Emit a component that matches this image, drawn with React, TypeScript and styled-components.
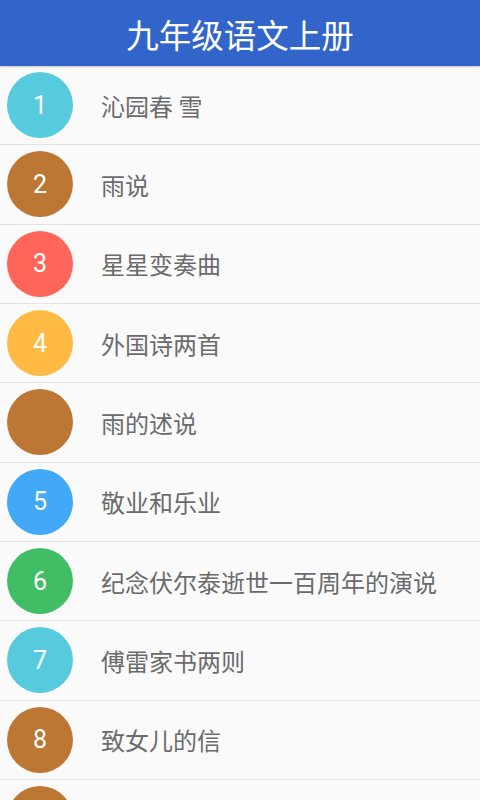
import React from "react";
import styled, {createGlobalStyle} from "styled-components";

const GlobalStyle = createGlobalStyle`
  html, body {
    margin: 0;
    padding: 0;
    background: #fafafa;
    font-family: Roboto, "Noto Sans CJK SC", sans-serif;
  }
`;

interface Lesson {
    num?: string;
    title?: string;
    color: string;
}

// last row only peeks in at the bottom edge
const lessons: Lesson[] = [
    {num: "1", title: "沁园春 雪", color: "#57cbde"},
    {num: "2", title: "雨说", color: "#bd7734"},
    {num: "3", title: "星星变奏曲", color: "#ff6559"},
    {num: "4", title: "外国诗两首", color: "#ffba43"},
    {title: "雨的述说", color: "#bd7734"},
    {num: "5", title: "敬业和乐业", color: "#42a8f8"},
    {num: "6", title: "纪念伏尔泰逝世一百周年的演说", color: "#41be65"},
    {num: "7", title: "傅雷家书两则", color: "#57cbde"},
    {num: "8", title: "致女儿的信", color: "#bd7734"},
    {color: "#bd7734"},
];

const S = {
    Page: styled.div`
      width: 480px;
      height: 800px;
      overflow: hidden;
      background: #fafafa;
    `,
    Header: styled.header`
      height: 66px;
      background: #3165c9;
      display: flex;
      align-items: center;
      justify-content: center;
      color: #fff;
      font-size: 32.5px;
      font-family: "Noto Sans CJK SC", sans-serif;
      box-shadow: 0 1px 2px rgba(0, 0, 0, 0.2);
    `,
    List: styled.ul`
      list-style: none;
      margin: 0;
      padding: 0;
    `,
    Row: styled.li`
      height: 79.33px;
      box-sizing: border-box;
      border-bottom: 1px solid #e2e2e2;
      display: flex;
      align-items: center;
      padding-left: 7px;
    `,
    Badge: styled.div<{ $color: string }>`
      width: 66px;
      height: 66px;
      border-radius: 50%;
      background: ${p => p.$color};
      color: #fff;
      display: flex;
      align-items: center;
      justify-content: center;
      font-family: Roboto, sans-serif;
      font-weight: 400;
      font-size: 25px;
      flex-shrink: 0;
    `,
    Title: styled.span`
      margin-left: 28px;
      font-size: 24px;
      color: #6b6b6b;
      font-family: "Noto Sans CJK SC", sans-serif;
      white-space: nowrap;
    `,
}

const App: React.FC = () => {
    return (
        <S.Page>
            <GlobalStyle/>
            <S.Header>九年级语文上册</S.Header>
            <S.List>
                {lessons.map((l, i) => (
                    <S.Row key={i}>
                        <S.Badge $color={l.color}>{l.num}</S.Badge>
                        {l.title && <S.Title>{l.title}</S.Title>}
                    </S.Row>
                ))}
            </S.List>
        </S.Page>
    )
}

export default App
